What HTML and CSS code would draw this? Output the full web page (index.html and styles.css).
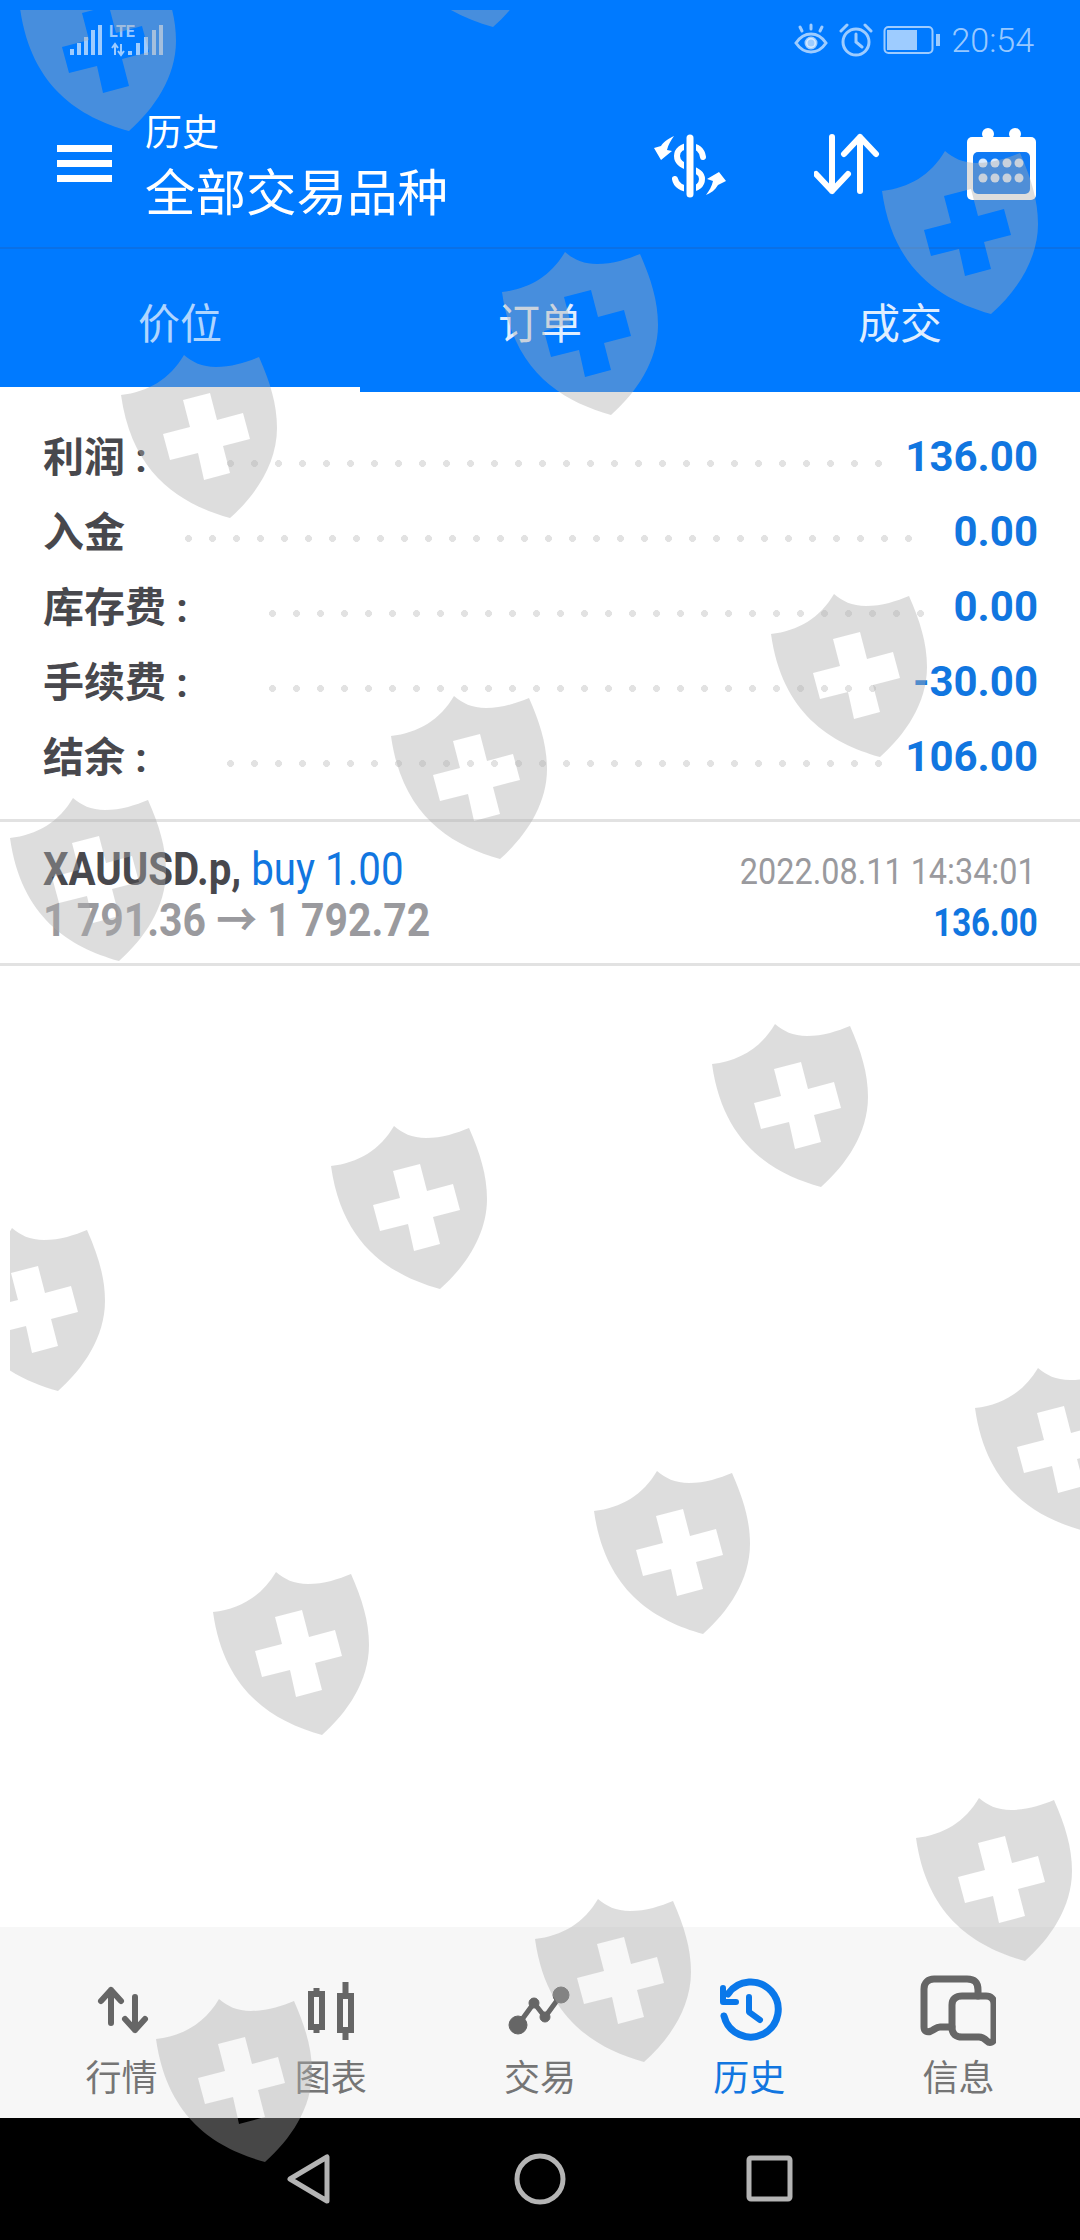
FILE: index.html
```html
<!DOCTYPE html>
<html lang="zh">
  <head>
    <meta charset="UTF-8" />
    <meta name="viewport" content="width=device-width, initial-scale=1.0" />
    <title>历史</title>
    <link rel="stylesheet" href="styles.css">
  </head>
  <body>
    <div class="app">
      <header class="app-header">
        <div class="status-bar">
          <svg class="signal" width="110" height="40" viewBox="0 0 110 40" fill="currentColor">
            <rect x="8" y="29" width="4" height="6"></rect>
            <rect x="15" y="23" width="4" height="12"></rect>
            <rect x="22" y="17" width="4" height="18"></rect>
            <rect x="29" y="10" width="4" height="25"></rect>
            <rect x="36" y="5" width="4" height="30"></rect>
            <text x="47" y="17" class="signal-lte">LTE</text>
            <path class="signal-arrows" d="M53 35V24M50 28l3-4 3 4M59 24v11M56 31l3 4 3-4" fill="none" stroke="currentColor" stroke-width="2"></path>
            <rect x="66" y="31" width="4" height="4"></rect>
            <rect x="74" y="23" width="4" height="12"></rect>
            <rect x="82" y="17" width="4" height="18"></rect>
            <rect x="90" y="10" width="4" height="25"></rect>
            <rect x="97" y="5" width="4" height="30"></rect>
          </svg>
          <div class="status-right">
            <svg width="36" height="36" viewBox="0 0 36 36" fill="none" stroke="currentColor" stroke-width="3" stroke-linecap="round">
              <path d="M3 21c4-6 9-9 15-9s11 3 15 9c-4 6-9 9-15 9s-11-3-15-9z"></path>
              <circle cx="18" cy="21" r="5" fill="currentColor"></circle>
              <path d="M18 7V3M9 9 7 5M27 9l2-4"></path>
            </svg>
            <svg width="34" height="36" viewBox="0 0 34 36" fill="none" stroke="currentColor" stroke-width="3" stroke-linecap="round">
              <circle cx="17" cy="20" r="13"></circle>
              <path d="M17 12v8l6 5M2 9l6-6M32 9l-6-6"></path>
            </svg>
            <svg width="58" height="30" viewBox="0 0 58 30" fill="none" stroke="currentColor">
              <rect x="1.5" y="2" width="48" height="26" rx="4" stroke-width="2"></rect>
              <rect x="4" y="5" width="30" height="20" fill="currentColor" stroke="none"></rect>
              <rect x="53" y="9" width="4" height="12" fill="currentColor" stroke="none"></rect>
            </svg>
            <span class="status-time">20:54</span>
          </div>
        </div>

        <div class="toolbar">
          <div class="menu-icon"><i></i><i></i><i></i></div>
          <div class="toolbar-title">
            <div class="title-small">历史</div>
            <div class="title-large">全部交易品种</div>
          </div>
          <div class="toolbar-actions">
            <svg width="76" height="70" viewBox="14 8 76 70" fill="none" stroke-linecap="round">
              <path d="M63 36C62 29 57 25 50 25 42 25 37 29 37 35 37 42 43 45 50 47 57 50 62 52 62 58 62 64 57 68 50 68 42 68 36 64 35 58" stroke="#fff" stroke-width="6"></path>
              <path d="M50 15V75" stroke="#007aff" stroke-width="12" stroke-linecap="butt"></path>
              <path d="M50 17V73" stroke="#fff" stroke-width="7"></path>
              <path d="M34 15C27 18 23 22 21 25L14 27 21 39 32 30 27 29C28 24 31 19 34 15Z" fill="#fff"></path>
              <path d="M66 74C71 72 75 69 78 64L86 60 79 51 67 58 73 60C72 65 69 70 66 74Z" fill="#fff"></path>
            </svg>
            <svg width="68" height="62" viewBox="2 0 68 62" fill="none" stroke="#fff" stroke-width="6" stroke-linecap="round" stroke-linejoin="round">
              <path d="M20 4v54M4 41l16 17 16-17"></path>
              <path d="M48 58V4M32 21 48 4l16 17"></path>
            </svg>
            <svg width="72" height="74" viewBox="0 0 72 74">
              <rect x="1" y="10" width="69" height="63" rx="5" fill="#fff"></rect>
              <rect x="7" y="25" width="57" height="42" rx="5" fill="#0f7af5"></rect>
              <circle cx="22" cy="7" r="6" fill="#fff"></circle>
              <circle cx="49" cy="7" r="6" fill="#fff"></circle>
              <g fill="#fff" opacity="0.85">
                <circle cx="17" cy="36" r="4.5"></circle><circle cx="29" cy="36" r="4.5"></circle><circle cx="41" cy="36" r="4.5"></circle><circle cx="53" cy="36" r="4.5"></circle>
                <circle cx="17" cy="51" r="4.5"></circle><circle cx="29" cy="51" r="4.5"></circle><circle cx="41" cy="51" r="4.5"></circle><circle cx="53" cy="51" r="4.5"></circle>
              </g>
            </svg>
          </div>
        </div>

        <nav class="tabs">
          <div class="tab tab-active">价位</div>
          <div class="tab">订单</div>
          <div class="tab">成交</div>
        </nav>
      </header>

      <main class="content">
        <section class="summary">
          <div class="summary-row">
            <span class="summary-label">利润 :</span>
            <span class="dots dots-short"></span>
            <span class="summary-value">136.00</span>
          </div>
          <div class="summary-row">
            <span class="summary-label">入金</span>
            <span class="dots dots-deposit"></span>
            <span class="summary-value">0.00</span>
          </div>
          <div class="summary-row">
            <span class="summary-label">库存费 :</span>
            <span class="dots dots-fee"></span>
            <span class="summary-value">0.00</span>
          </div>
          <div class="summary-row">
            <span class="summary-label">手续费 :</span>
            <span class="dots dots-fee"></span>
            <span class="summary-value">-30.00</span>
          </div>
          <div class="summary-row">
            <span class="summary-label">结余 :</span>
            <span class="dots dots-short"></span>
            <span class="summary-value">106.00</span>
          </div>
        </section>

        <section class="trade">
          <div class="trade-left">
            <div class="trade-symbol squeeze">XAUUSD.p, <span class="trade-side">buy 1.00</span></div>
            <div class="trade-price squeeze">1 791.36 → 1 792.72</div>
          </div>
          <div class="trade-right">
            <div class="trade-date squeeze">2022.08.11 14:34:01</div>
            <div class="trade-profit squeeze">136.00</div>
          </div>
        </section>
      </main>

      <nav class="bottom-nav">
        <div class="nav-item">
          <svg width="72" height="72" viewBox="0 0 72 72" fill="none" stroke="#666" stroke-width="6" stroke-linecap="round" stroke-linejoin="round">
            <path d="M25 48V15M15 26l10-11 10 11"></path>
            <path d="M49 22v33M39 44l10 11 10-11"></path>
          </svg>
          <span>行情</span>
        </div>
        <div class="nav-item">
          <svg width="72" height="72" viewBox="0 0 72 72" fill="none" stroke="#666" stroke-width="6">
            <rect x="16" y="19" width="11" height="33"></rect>
            <rect x="45" y="21" width="11" height="34"></rect>
            <path d="M21.500 13v6M21.500 52v6M50.500 7v14M50.500 55v10"></path>
          </svg>
          <span>图表</span>
        </div>
        <div class="nav-item">
          <svg width="72" height="72" viewBox="0 0 72 72" fill="#666" stroke="#666">
            <path d="M14 50 30 28 41 42 57 20" fill="none" stroke-width="5" stroke-linejoin="round"></path>
            <circle cx="14" cy="50" r="9"></circle>
            <circle cx="30" cy="28" r="5"></circle>
            <circle cx="41" cy="42" r="5"></circle>
            <circle cx="57" cy="20" r="8"></circle>
          </svg>
          <span>交易</span>
        </div>
        <div class="nav-item nav-item-active">
          <svg width="72" height="72" viewBox="0 0 72 72" fill="none" stroke="#0a78ea" stroke-width="7" stroke-linecap="round" stroke-linejoin="round">
            <path d="M11 41A27.500 27.500 0 1 0 15 19"></path>
            <path d="M10 13V27H23" stroke-width="6"></path>
            <path d="M36 22V37L47 45" stroke-width="6"></path>
          </svg>
          <span>历史</span>
        </div>
        <div class="nav-item">
          <svg width="76" height="72" viewBox="0 0 76 72" fill="none" stroke="#666" stroke-width="7" stroke-linecap="round" stroke-linejoin="round">
            <path d="M32 52H20c-4 0-6 3-9 4-4 2-7 0-7-4V14c0-6 4-10 10-10h33c7 0 11 3 11 11v6"></path>
            <path d="M42 21h24c5 0 8 3 8 8v34c0 4-4 6-7 3-2-2-4-4-8-4H42c-6 0-10-3-10-9V30c0-6 4-9 10-9z"></path>
          </svg>
          <span>信息</span>
        </div>
      </nav>

      <div class="system-nav">
        <svg width="60" height="60" viewBox="0 0 60 60" fill="none" stroke="#b4b4b4" stroke-width="5" stroke-linejoin="round">
          <path d="M10 30 47 8v44z"></path>
        </svg>
        <svg width="60" height="60" viewBox="0 0 60 60" fill="none" stroke="#b4b4b4" stroke-width="5">
          <circle cx="30" cy="30" r="23"></circle>
        </svg>
        <svg width="60" height="60" viewBox="0 0 60 60" fill="none" stroke="#b4b4b4" stroke-width="5" stroke-linejoin="round">
          <rect x="9" y="9" width="41" height="41" rx="2"></rect>
        </svg>
      </div>

      <!-- watermark over the whole screen -->
      <svg class="watermark" width="1070" height="2230" viewBox="10 10 1070 2230" aria-hidden="true">
        <defs>
          <path id="shield" fill-rule="evenodd" d="M64 1C72 8 82 13 96 13 112 13 127 8 139 3 150 28 157 50 157 74 157 110 135 142 110 164 60 150 12 120 1 41 28 38 50 25 64 1ZM63 46 90 39 97 66 123 59 130 85 103 92 110 119 84 126 78 99 50 106 43 80 70 73Z"></path>
        </defs>
        <g fill="#acacac" fill-opacity="0.41">
          <use href="#shield" x="19" y="-33"></use>
          <use href="#shield" x="383" y="-137"></use>
          <use href="#shield" x="120" y="354"></use>
          <use href="#shield" x="501" y="251"></use>
          <use href="#shield" x="881" y="150"></use>
          <use href="#shield" x="9" y="797"></use>
          <use href="#shield" x="390" y="695"></use>
          <use href="#shield" x="770" y="593"></use>
          <use href="#shield" x="-52" y="1227"></use>
          <use href="#shield" x="330" y="1125"></use>
          <use href="#shield" x="711" y="1023"></use>
          <use href="#shield" x="212" y="1571"></use>
          <use href="#shield" x="593" y="1470"></use>
          <use href="#shield" x="974" y="1367"></use>
          <use href="#shield" x="155" y="1998"></use>
          <use href="#shield" x="534" y="1898"></use>
          <use href="#shield" x="915" y="1797"></use>
        </g>
      </svg>
    </div>
  </body>
</html>
```

FILE: styles.css
```css
:root {
  --blue: #007aff;
  --value: #1176e0;
  --label: #48484d;
  --muted: #9a9a9e;
  --line: #e2e2e2;
}

body {
  margin: 0;
  padding: 0;
  background-color: #fff;
  font-family: Roboto, "Noto Sans CJK SC", sans-serif;
}

svg {
  display: block;
}

.app {
  position: relative;
  width: 1080px;
  height: 2240px;
  overflow: hidden;
  display: flex;
  flex-direction: column;
}

/* header */
.app-header {
  background-color: var(--blue);
  color: #fff;
}

.status-bar {
  height: 80px;
  display: flex;
  align-items: center;
  justify-content: space-between;
  padding: 0 46px 0 62px;
  color: rgba(255, 255, 255, 0.62);
}

.signal-lte {
  font-size: 16px;
  font-weight: 700;
}

.status-right {
  display: flex;
  align-items: center;
  gap: 10px;
}

.status-time {
  font-size: 34px;
  font-weight: 300;
}

.toolbar {
  height: 167px;
  display: flex;
  align-items: center;
  padding: 0 42px 0 57px;
  border-bottom: 2px solid #0a70e6;
}

.menu-icon {
  width: 55px;
  display: flex;
  flex-direction: column;
  gap: 8px;
}

.menu-icon i {
  display: block;
  height: 7px;
  background-color: #fff;
}

.toolbar-title {
  margin-left: 33px;
  flex: 1;
}

.title-small {
  font-size: 37px;
  line-height: 60px;
}

.title-large {
  font-size: 50.500px;
  line-height: 60px;
}

.toolbar-actions {
  display: flex;
  align-items: center;
  gap: 84px;
}

.tabs {
  display: flex;
  height: 143px;
}

.tab {
  flex: 1;
  text-align: center;
  font-size: 42px;
  line-height: 152px;
  color: rgba(255, 255, 255, 0.88);
}

.tab-active {
  height: 138px;
  border-bottom: 5px solid #fff;
  color: rgba(255, 255, 255, 0.7);
}

/* summary */
.content {
  flex: 1;
}

.summary {
  padding: 28px 42px 24px 43px;
  border-bottom: 3px solid var(--line);
}

.summary-row {
  height: 75px;
  display: flex;
  align-items: center;
}

.summary-label {
  font-size: 41px;
  font-weight: 700;
  color: var(--label);
  white-space: pre;
  margin-bottom: 8px;
}

.summary-value {
  font-size: 42px;
  font-weight: 700;
  color: var(--value);
  margin-bottom: 2px;
}

.dots {
  flex: 1;
  height: 7px;
  margin-top: 12px;
  background-image: radial-gradient(circle at 3.500px 3.500px, #e2e2e2 3.200px, transparent 3.700px);
  background-size: 24px 7px;
  background-repeat: repeat-x;
}

.dots-short {
  margin-left: 80px;
  margin-right: 22px;
}

.dots-deposit {
  margin-left: 60px;
  margin-right: 38px;
}

.dots-fee {
  margin-left: 81px;
  margin-right: 24px;
}

/* trade row */
.trade {
  height: 144px;
  box-sizing: border-box;
  padding: 22px 42px 0 43px;
  display: flex;
  justify-content: space-between;
  border-bottom: 3px solid var(--line);
}

.squeeze {
  white-space: nowrap;
}

.trade-left .squeeze {
  transform-origin: left center;
}

.trade-right {
  padding-top: 3px;
  text-align: right;
}

.trade-right .squeeze {
  transform-origin: right center;
}

.trade-symbol {
  font-size: 46px;
  line-height: 50px;
  font-weight: 700;
  color: var(--label);
  transform: scaleX(0.875);
}

.trade-side {
  font-weight: 400;
  color: var(--value);
}

.trade-price {
  margin-top: 1px;
  font-size: 46px;
  line-height: 50px;
  font-weight: 700;
  color: var(--muted);
  transform: scaleX(0.89);
}

.trade-date {
  margin-right: 2px;
  font-size: 36px;
  line-height: 50px;
  color: var(--muted);
  transform: scaleX(0.9);
}

.trade-profit {
  font-size: 38px;
  line-height: 52px;
  font-weight: 700;
  color: var(--value);
  transform: scaleX(0.87);
}

/* bottom bar */
.bottom-nav {
  height: 191px;
  box-sizing: border-box;
  padding: 48px 17px 0;
  display: flex;
  background-color: #f7f7f7;
}

.nav-item {
  flex: 1;
  display: flex;
  flex-direction: column;
  align-items: center;
  font-size: 36px;
  line-height: 64px;
  color: #757575;
}

.nav-item-active {
  color: #1176e0;
}

.system-nav {
  height: 122px;
  display: flex;
  align-items: center;
  justify-content: center;
  gap: 170px;
  background-color: #000;
}

.watermark {
  position: absolute;
  top: 10px;
  left: 10px;
  pointer-events: none;
}
```
